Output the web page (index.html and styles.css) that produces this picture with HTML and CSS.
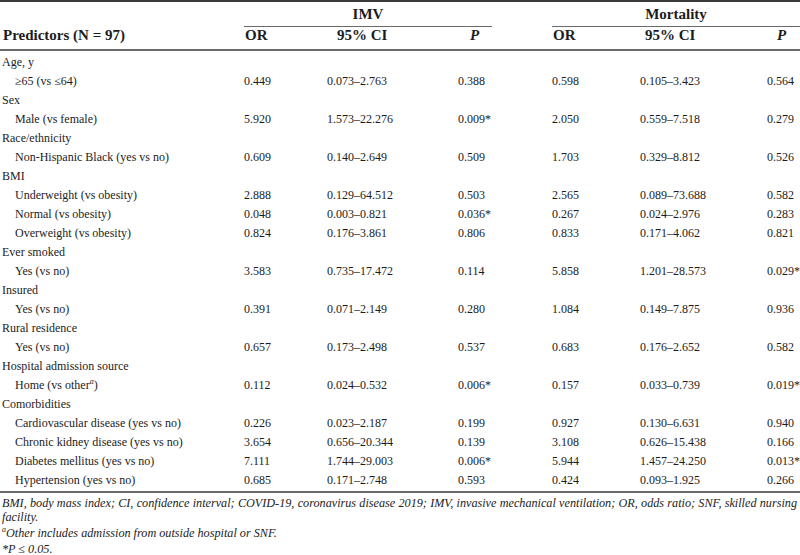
FILE: index.html
```html
<!DOCTYPE html>
<html>
<head>
<meta charset="utf-8">
<link rel="stylesheet" href="styles.css">
</head>
<body>
<table class="tbl">
  <colgroup>
    <col class="c-pred"><col class="c-or"><col class="c-ci"><col class="c-p"><col class="c-gap"><col class="c-or2"><col class="c-ci2"><col class="c-p2">
  </colgroup>
  <thead>
    <tr class="span-row">
      <th></th>
      <th colspan="3" class="spanner">IMV</th>
      <th></th>
      <th colspan="3" class="spanner">Mortality</th>
    </tr>
    <tr class="head-row">
      <th class="h-pred">Predictors (N = 97)</th>
      <th class="h-or">OR</th>
      <th class="h-ci">95% CI</th>
      <th class="h-p"><i>P</i></th>
      <th></th>
      <th class="h-or">OR</th>
      <th class="h-ci2">95% CI</th>
      <th class="h-p2"><i>P</i></th>
    </tr>
  </thead>
  <tbody>
    <tr class="grp first"><td colspan="8">Age, y</td></tr>
    <tr><td class="ind">≥65 (vs ≤64)</td><td>0.449</td><td>0.073–2.763</td><td>0.388</td><td></td><td>0.598</td><td>0.105–3.423</td><td>0.564</td></tr>
    <tr class="grp"><td colspan="8">Sex</td></tr>
    <tr><td class="ind">Male (vs female)</td><td>5.920</td><td>1.573–22.276</td><td>0.009*</td><td></td><td>2.050</td><td>0.559–7.518</td><td>0.279</td></tr>
    <tr class="grp"><td colspan="8">Race/ethnicity</td></tr>
    <tr><td class="ind">Non-Hispanic Black (yes vs no)</td><td>0.609</td><td>0.140–2.649</td><td>0.509</td><td></td><td>1.703</td><td>0.329–8.812</td><td>0.526</td></tr>
    <tr class="grp"><td colspan="8">BMI</td></tr>
    <tr><td class="ind">Underweight (vs obesity)</td><td>2.888</td><td>0.129–64.512</td><td>0.503</td><td></td><td>2.565</td><td>0.089–73.688</td><td>0.582</td></tr>
    <tr><td class="ind">Normal (vs obesity)</td><td>0.048</td><td>0.003–0.821</td><td>0.036*</td><td></td><td>0.267</td><td>0.024–2.976</td><td>0.283</td></tr>
    <tr><td class="ind">Overweight (vs obesity)</td><td>0.824</td><td>0.176–3.861</td><td>0.806</td><td></td><td>0.833</td><td>0.171–4.062</td><td>0.821</td></tr>
    <tr class="grp"><td colspan="8">Ever smoked</td></tr>
    <tr><td class="ind">Yes (vs no)</td><td>3.583</td><td>0.735–17.472</td><td>0.114</td><td></td><td>5.858</td><td>1.201–28.573</td><td>0.029*</td></tr>
    <tr class="grp"><td colspan="8">Insured</td></tr>
    <tr><td class="ind">Yes (vs no)</td><td>0.391</td><td>0.071–2.149</td><td>0.280</td><td></td><td>1.084</td><td>0.149–7.875</td><td>0.936</td></tr>
    <tr class="grp"><td colspan="8">Rural residence</td></tr>
    <tr><td class="ind">Yes (vs no)</td><td>0.657</td><td>0.173–2.498</td><td>0.537</td><td></td><td>0.683</td><td>0.176–2.652</td><td>0.582</td></tr>
    <tr class="grp"><td colspan="8">Hospital admission source</td></tr>
    <tr><td class="ind">Home (vs other<sup class="fn">a</sup>)</td><td>0.112</td><td>0.024–0.532</td><td>0.006*</td><td></td><td>0.157</td><td>0.033–0.739</td><td>0.019*</td></tr>
    <tr class="grp"><td colspan="8">Comorbidities</td></tr>
    <tr><td class="ind">Cardiovascular disease (yes vs no)</td><td>0.226</td><td>0.023–2.187</td><td>0.199</td><td></td><td>0.927</td><td>0.130–6.631</td><td>0.940</td></tr>
    <tr><td class="ind">Chronic kidney disease (yes vs no)</td><td>3.654</td><td>0.656–20.344</td><td>0.139</td><td></td><td>3.108</td><td>0.626–15.438</td><td>0.166</td></tr>
    <tr><td class="ind">Diabetes mellitus (yes vs no)</td><td>7.111</td><td>1.744–29.003</td><td>0.006*</td><td></td><td>5.944</td><td>1.457–24.250</td><td>0.013*</td></tr>
    <tr class="last"><td class="ind">Hypertension (yes vs no)</td><td>0.685</td><td>0.171–2.748</td><td>0.593</td><td></td><td>0.424</td><td>0.093–1.925</td><td>0.266</td></tr>
  </tbody>
</table>
<div class="notes">
  <p class="note note-abbr">BMI, body mass index; CI, confidence interval; COVID-19, coronavirus disease 2019; IMV, invasive mechanical ventilation; OR, odds ratio; SNF, skilled nursing facility.</p>
  <p class="note"><sup class="fn">a</sup>Other includes admission from outside hospital or SNF.</p>
  <p class="note">*P ≤ 0.05.</p>
</div>
</body>
</html>
```

FILE: styles.css
```css
html, body {
  margin: 0;
  padding: 0;
  background: #fff;
}
body {
  width: 800px;
  font-family: "Liberation Serif", "Times New Roman", serif;
  color: #1c1c1c;
}
.tbl {
  width: 800px;
  border-collapse: collapse;
  table-layout: fixed;
  font-size: 12px;
}
.c-pred { width: 244px; }
.c-or { width: 83px; }
.c-ci { width: 131px; }
.c-p { width: 34px; }
.c-gap { width: 60px; }
.c-or2 { width: 88px; }
.c-ci2 { width: 127px; }
.c-p2 { width: 33px; }

.tbl thead th {
  box-sizing: border-box;
  font-size: 15px;
  font-weight: bold;
  text-align: left;
  padding: 0;
  white-space: nowrap;
  line-height: 17px;
  vertical-align: bottom;
}
.span-row th {
  border-top: 2px solid #3a3a3a;
  height: 25px;
  padding-bottom: 3px !important;
}
.span-row th.spanner {
  text-align: center;
  border-bottom: 1px solid #6a6a6a;
}
.head-row th {
  height: 24px;
  padding-bottom: 5px !important;
  border-bottom: 2px solid #6a6a6a;
}
.h-pred { padding-left: 3px !important; }
.h-or { padding-left: 1px !important; }
.h-ci { padding-left: 10px !important; }
.h-p { padding-left: 12px !important; }
.h-ci2 { padding-left: 5px !important; }
.h-p2 { padding-left: 10px !important; }

.tbl td {
  padding: 0;
  height: 19px;
  line-height: 19px;
  white-space: nowrap;
  vertical-align: middle;
}
.tbl td:first-child {
  padding-left: 2px;
}
.tbl td.ind {
  padding-left: 15px;
}
.tbl tr.first td {
  box-sizing: border-box;
  height: 21px;
  padding-top: 2px;
}
.tbl tr.last td {
  border-bottom: 2px solid #6a6a6a;
  height: 20px;
  vertical-align: top;
}
sup.fn {
  font-style: italic;
  font-size: 8px;
  line-height: 0;
}
.notes {
  padding: 3px 3px 0 2px;
}
.note {
  margin: 0 0 2px 0;
  font-style: italic;
  font-size: 12.2px;
  line-height: 14px;
  text-align: justify;
}
.note-abbr {
  word-spacing: -1.5px;
}
```
